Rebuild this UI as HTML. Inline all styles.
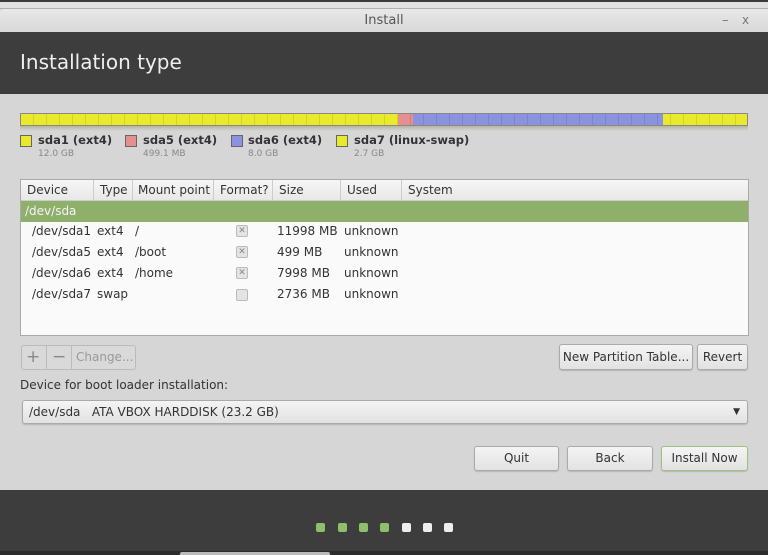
<!DOCTYPE html>
<html><head><style>
*{margin:0;padding:0;box-sizing:border-box}
body{width:768px;height:555px;overflow:hidden;background:#d6d6d6;font-family:"DejaVu Sans","Liberation Sans",sans-serif;font-size:12px;color:#333;position:relative;white-space:nowrap}
.a{position:absolute;white-space:nowrap}
.btn{position:absolute;border:1px solid #aaa;border-radius:3px;background:linear-gradient(#f4f4f4,#e2e2e2);text-align:center;font-size:12px;color:#333;box-shadow:0 1px 1px rgba(0,0,0,.15)}
.row{position:absolute;left:0;width:728px;height:21px;line-height:21px;font-size:12px;color:#333}
.cb{position:absolute;width:12px;height:12px;border:1px solid #bbb;border-radius:2px;background:#e4e4e4;font-size:9px;line-height:10px;text-align:center;color:#888}
.sw{position:absolute;width:12px;height:12px;border:1px solid #666}
.dot{position:absolute;top:523px;width:9px;height:9px;border-radius:2px}
.lg{position:absolute;top:133px;font-weight:bold;font-size:11.5px;color:#333}
.ls{position:absolute;top:149px;font-size:9px;color:#888}
</style></head><body>
<div class="a" style="left:0;top:0;width:768px;height:2px;background:#3a3a3a"></div>
<div class="a" style="left:0;top:2px;width:768px;height:7px;background:#e0e0e0;border-bottom:1px solid #b0b0b0"></div>
<div class="a" style="left:0;top:9px;width:768px;height:23px;background:linear-gradient(#e8e8e8,#d8d8d8);border-top-left-radius:4px;text-align:center;line-height:23px;font-size:13px;color:#555">Install</div>
<div class="a" style="left:722px;top:9px;line-height:23px;color:#777;font-size:13px">–</div>
<div class="a" style="left:742px;top:9px;line-height:23px;color:#777;font-size:12px">x</div>
<div class="a" style="left:0;top:32px;width:768px;height:62px;background:#3d3d3d"></div>
<div class="a" style="left:20px;top:50px;font-size:20px;color:#eee">Installation type</div>

<div class="a" style="left:20px;top:113px;width:728px;height:13px;border:1px solid #888;background:
repeating-linear-gradient(90deg,transparent 0 12px,rgba(0,0,0,.1) 12px 13px),
linear-gradient(90deg,#eaea2c 0 377px,#e58f8f 377px 392px,#8b93e0 392px 642px,#eaea2c 642px)"></div>
<div class="a" style="left:20px;top:126px;width:728px;height:5px;background:linear-gradient(rgba(120,120,60,.35),transparent)"></div>

<div class="sw" style="left:20px;top:135px;background:#eaea2c"></div>
<div class="lg" style="left:38px">sda1 (ext4)</div>
<div class="ls" style="left:38px">12.0 GB</div>
<div class="sw" style="left:125px;top:135px;background:#e58f8f"></div>
<div class="lg" style="left:143px">sda5 (ext4)</div>
<div class="ls" style="left:143px">499.1 MB</div>
<div class="sw" style="left:231px;top:135px;background:#8b93e0"></div>
<div class="lg" style="left:248px">sda6 (ext4)</div>
<div class="ls" style="left:248px">8.0 GB</div>
<div class="sw" style="left:336px;top:135px;background:#eaea2c"></div>
<div class="lg" style="left:354px">sda7 (linux-swap)</div>
<div class="ls" style="left:354px">2.7 GB</div>

<div class="a" style="left:20px;top:179px;width:729px;height:157px;border:1px solid #aaa;background:#fafafa;overflow:hidden">
 <div class="a" style="left:0;top:0;width:728px;height:21px;background:linear-gradient(#f6f6f6,#e8e8e8);border-bottom:1px solid #ccc;line-height:20px;font-size:12px">
  <span class="a" style="left:6px">Device</span><span class="a" style="left:72px;top:0;height:21px;border-left:1px solid #ccc;padding-left:6px">Type</span>
  <span class="a" style="left:111px;height:21px;border-left:1px solid #ccc;padding-left:5px">Mount point</span>
  <span class="a" style="left:192px;height:21px;border-left:1px solid #ccc;padding-left:6px">Format?</span>
  <span class="a" style="left:251px;height:21px;border-left:1px solid #ccc;padding-left:6px">Size</span>
  <span class="a" style="left:319px;height:21px;border-left:1px solid #ccc;padding-left:6px">Used</span>
  <span class="a" style="left:380px;height:21px;border-left:1px solid #ccc;padding-left:6px">System</span>
 </div>
 <div class="row" style="top:21px;background:#8fb06a;color:#f4f4f4;padding-left:4px;line-height:20px">/dev/sda</div>
 <div class="row" style="top:41px"><span class="a" style="left:11px">/dev/sda1</span><span class="a" style="left:76px">ext4</span><span class="a" style="left:114px">/</span><span class="a" style="left:256px">11998 MB</span><span class="a" style="left:323px">unknown</span></div>
 <div class="row" style="top:62px"><span class="a" style="left:11px">/dev/sda5</span><span class="a" style="left:76px">ext4</span><span class="a" style="left:114px">/boot</span><span class="a" style="left:256px">499 MB</span><span class="a" style="left:323px">unknown</span></div>
 <div class="row" style="top:83px"><span class="a" style="left:11px">/dev/sda6</span><span class="a" style="left:76px">ext4</span><span class="a" style="left:114px">/home</span><span class="a" style="left:256px">7998 MB</span><span class="a" style="left:323px">unknown</span></div>
 <div class="row" style="top:104px"><span class="a" style="left:11px">/dev/sda7</span><span class="a" style="left:76px">swap</span><span class="a" style="left:256px">2736 MB</span><span class="a" style="left:323px">unknown</span></div>
 <div class="cb" style="left:215px;top:45px">✕</div>
 <div class="cb" style="left:215px;top:66px">✕</div>
 <div class="cb" style="left:215px;top:87px">✕</div>
 <div class="cb" style="left:215px;top:109px"></div>
</div>

<div class="a" style="left:21px;top:345px;width:115px;height:25px;border:1px solid #bbb;border-radius:3px;background:#d9d9d9"></div>
<div class="a" style="left:46px;top:346px;width:1px;height:23px;background:#bbb"></div>
<div class="a" style="left:71px;top:346px;width:1px;height:23px;background:#bbb"></div>
<div class="a" style="left:26px;top:346px;font-size:17px;line-height:22px;color:#888">+</div>
<div class="a" style="left:52px;top:346px;font-size:17px;line-height:22px;color:#888">−</div>
<div class="a" style="left:76px;top:350px;color:#999">Change...</div>

<div class="btn" style="left:559px;top:344px;width:134px;height:26px;line-height:24px">New Partition Table...</div>
<div class="btn" style="left:697px;top:344px;width:51px;height:26px;line-height:24px">Revert</div>

<div class="a" style="left:20px;top:378px;color:#333">Device for boot loader installation:</div>
<div class="btn" style="left:22px;top:400px;width:726px;height:24px;text-align:left;padding-left:6px;line-height:22px">/dev/sda&nbsp;&nbsp;&nbsp;ATA VBOX HARDDISK (23.2 GB)<span class="a" style="right:7px;top:0;font-size:9px">▼</span></div>

<div class="btn" style="left:474px;top:446px;width:85px;height:25px;line-height:23px">Quit</div>
<div class="btn" style="left:567px;top:446px;width:86px;height:25px;line-height:23px">Back</div>
<div class="btn" style="left:661px;top:446px;width:87px;height:25px;line-height:23px;border-color:#9fc37f">Install Now</div>

<div class="a" style="left:0;top:490px;width:768px;height:61px;background:#3d3d3d"></div>
<div class="a" style="left:0;top:551px;width:768px;height:4px;background:#2c2c2c"></div>
<div class="a" style="left:180px;top:552px;width:150px;height:3px;background:#bbb;border-radius:2px 2px 0 0"></div>
<div class="dot" style="left:316px;background:#8fbf6a"></div>
<div class="dot" style="left:338px;background:#8fbf6a"></div>
<div class="dot" style="left:359px;background:#8fbf6a"></div>
<div class="dot" style="left:380px;background:#8fbf6a"></div>
<div class="dot" style="left:402px;background:#eee"></div>
<div class="dot" style="left:423px;background:#eee"></div>
<div class="dot" style="left:444px;background:#eee"></div>
</body></html>
